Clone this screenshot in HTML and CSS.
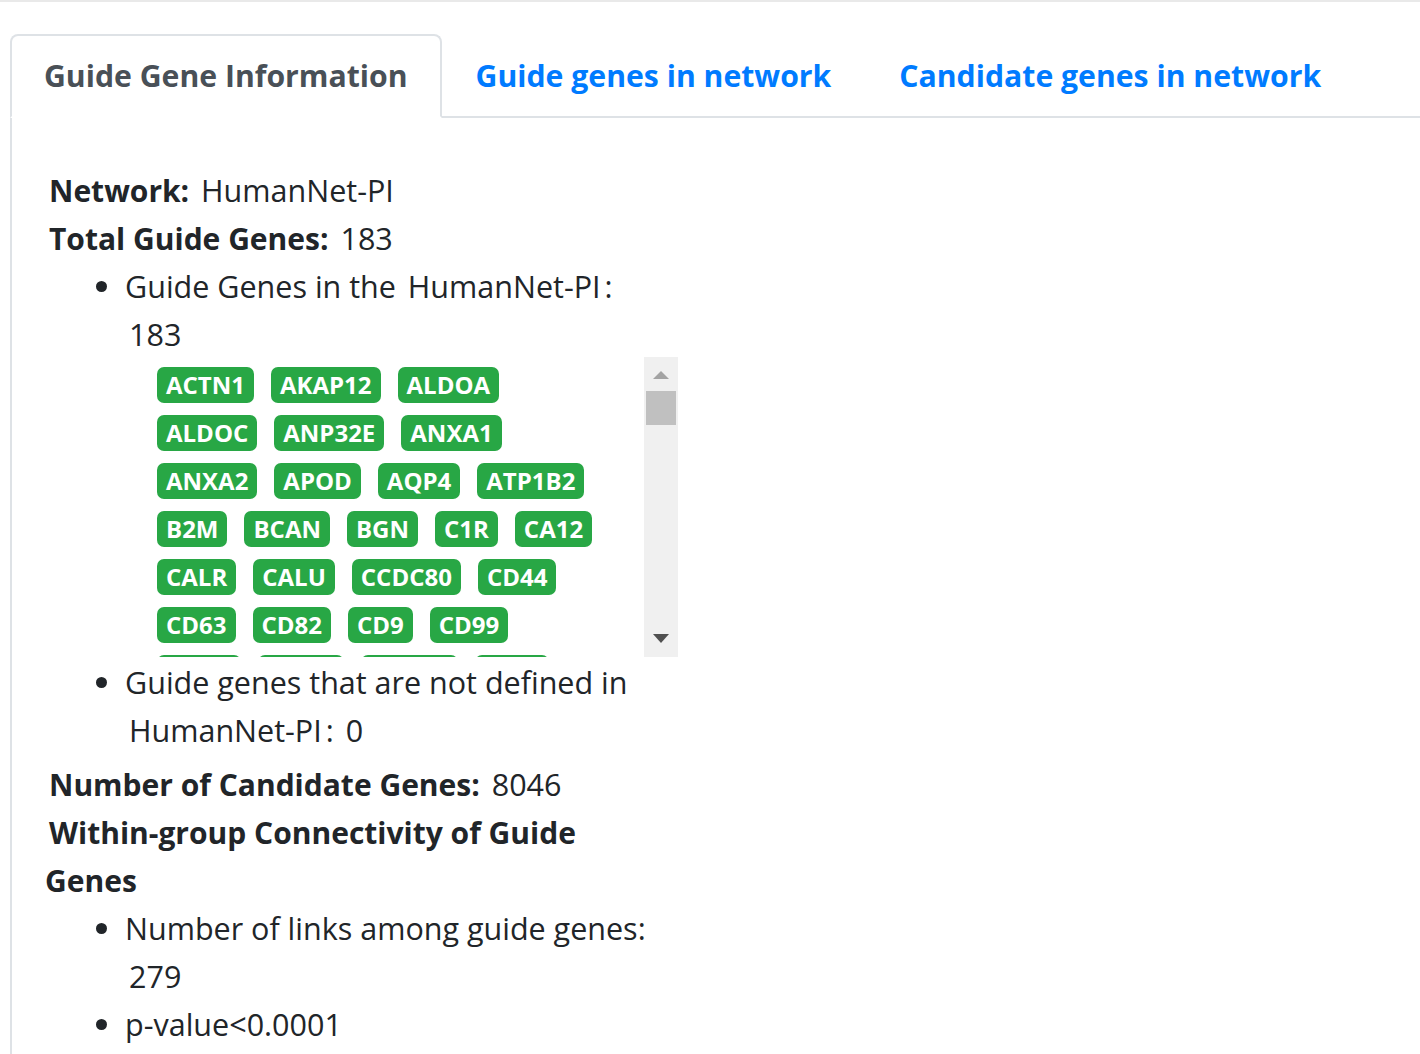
FILE: index.html
```html
<!DOCTYPE html>
<html lang="en">
<head>
<meta charset="utf-8">
<title>Guide Gene Information</title>
<link rel="stylesheet" href="styles.css">
</head>
<body>
<div class="page">
  <ul class="nav-tabs">
    <li><a class="nav-link active" href="#">Guide Gene Information</a></li>
    <li><a class="nav-link" href="#">Guide genes in network</a></li>
    <li><a class="nav-link" href="#">Candidate genes in network</a></li>
  </ul>
  <div class="tab-content">
    <div class="info-col">
      <p class="row-line"><b>Network:</b> <span class="val">HumanNet-PI</span></p>
      <p class="row-line"><b>Total Guide Genes:</b> <span class="val">183</span></p>
      <ul class="bullets">
        <li>Guide Genes in the <span class="val">HumanNet-PI</span>: <span class="val">183</span>
          <div class="gene-panel">
            <div class="genes">
              <span class="badge">ACTN1</span><span class="badge">AKAP12</span><span class="badge">ALDOA</span><span class="badge">ALDOC</span><span class="badge">ANP32E</span><span class="badge">ANXA1</span><span class="badge">ANXA2</span><span class="badge">APOD</span><span class="badge">AQP4</span><span class="badge">ATP1B2</span><span class="badge">B2M</span><span class="badge">BCAN</span><span class="badge">BGN</span><span class="badge">C1R</span><span class="badge">CA12</span><span class="badge">CALR</span><span class="badge">CALU</span><span class="badge">CCDC80</span><span class="badge">CD44</span><span class="badge">CD63</span><span class="badge">CD82</span><span class="badge">CD9</span><span class="badge">CD99</span><span class="badge">CLIC1</span><span class="badge">CNN3</span><span class="badge">CRYAB</span><span class="badge">CST3</span>
            </div>
            <div class="scrollbar" aria-hidden="true">
              <div class="sb-btn sb-up"><span class="arrow-up"></span></div>
              <div class="sb-track"><div class="sb-thumb"></div></div>
              <div class="sb-btn sb-down"><span class="arrow-down"></span></div>
            </div>
          </div>
        </li>
        <li>Guide genes that are not defined in <span class="val">HumanNet-PI</span>: <span class="val">0</span></li>
      </ul>
      <p class="row-line gap-top"><b>Number of Candidate Genes:</b> <span class="val">8046</span></p>
      <p class="row-line"><b>Within-group Connectivity of Guide Genes</b></p>
      <ul class="bullets">
        <li>Number of links among guide genes: <span class="val">279</span></li>
        <li>p-value&lt;0.0001</li>
      </ul>
    </div>
  </div>
</div>
</body>
</html>
```

FILE: styles.css
```css
* { box-sizing: border-box; }

html, body {
  margin: 0;
  padding: 0;
  background: #ffffff;
}

body {
  font-family: "Open Sans", "Noto Sans", "DejaVu Sans", sans-serif;
  font-size: 30.5px;
  line-height: 48px;
  color: #212529;
  overflow: hidden;
}

.page {
  border-top: 2px solid #e9e9e9;
  padding-top: 32px;
  height: 1054px;
  display: flex;
  flex-direction: column;
}

.nav-tabs {
  list-style: none;
  margin: 0 0 0 10px;
  padding: 0;
  display: flex;
  border-bottom: 2px solid #dee2e6;
}

.nav-tabs li {
  margin-bottom: -2px;
}

.nav-link {
  display: block;
  padding: 16px 32px;
  border: 2px solid transparent;
  border-radius: 8px 8px 0 0;
  color: #007bff;
  font-size: 30.2px;
  font-weight: 700;
  text-decoration: none;
  white-space: nowrap;
}

.nav-link.active {
  color: #495057;
  background: #ffffff;
  border-color: #dee2e6 #dee2e6 #ffffff;
}

.tab-content {
  margin-left: 10px;
  border-left: 2px solid #dee2e6;
  padding: 48px 0 0 33px;
  flex: 1;
}

.info-col {
  width: 615px;
}

.row-line {
  margin: 0;
  text-indent: 4px;
}

.row-line b {
  font-size: 30px;
  font-weight: 700;
  line-height: 1;
}

.gap-top {
  margin-top: 6px;
}

.val {
  display: inline-block;
  margin: 0 4px;
  text-indent: 0;
}

.bullets {
  margin: 0;
  padding-left: 80px;
}

.gene-panel {
  display: flex;
  margin: -1px 0 1px 4px;
  width: 549px;
  height: 300px;
}

.genes {
  flex: 1;
  overflow: hidden;
  padding: 10px 39px 0 28px;
  display: flex;
  flex-wrap: wrap;
  align-content: flex-start;
  column-gap: 17px;
  row-gap: 12px;
}

.badge {
  display: inline-block;
  background: #28a745;
  color: #ffffff;
  font-size: 24px;
  font-weight: 700;
  line-height: 24px;
  padding: 6px 9px;
  border-radius: 7px;
  white-space: nowrap;
}

.scrollbar {
  width: 34px;
  flex: none;
  background: #f0f0f0;
  display: flex;
  flex-direction: column;
}

.sb-btn {
  height: 33px;
  flex: none;
  display: flex;
  justify-content: center;
  align-items: flex-start;
}

.sb-up { padding-top: 14px; }
.sb-down { padding-top: 10px; }

.arrow-up {
  width: 0;
  height: 0;
  border-left: 8px solid transparent;
  border-right: 8px solid transparent;
  border-bottom: 8px solid #a3a3a3;
}

.arrow-down {
  width: 0;
  height: 0;
  border-left: 8px solid transparent;
  border-right: 8px solid transparent;
  border-top: 9px solid #505050;
}

.sb-track {
  flex: 1;
  padding: 1px 2px 0;
}

.sb-thumb {
  height: 34px;
  background: #c0c0c0;
}
```
